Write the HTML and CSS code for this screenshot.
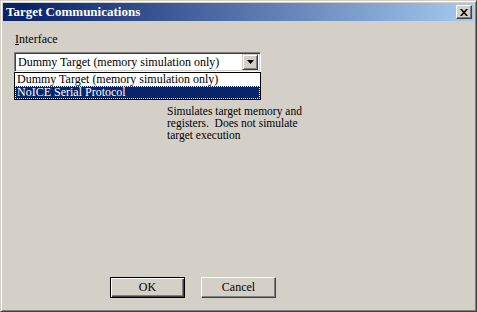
FILE: index.html
```html
<!DOCTYPE html>
<html lang="en">
<head>
  <meta charset="UTF-8">
  <title>Target Communications</title>
  <link rel="stylesheet" href="styles.css">
</head>
<body>
  <div class="window">
    <div class="titlebar">
      <span class="title">Target Communications</span>
      <button class="close-btn" aria-label="Close">
        <svg width="8" height="7" viewBox="0 0 8 7">
          <path d="M0 0h2l2 2.5 2-2.5h2l-3 3.5 3 3.5h-2l-2-2.5-2 2.5h-2l3-3.5z" fill="#000"/>
        </svg>
      </button>
    </div>

    <div class="content">
      <label class="label"><u>I</u>nterface</label>

      <div class="combo">
        <div class="combo-field">
          <span class="combo-text">Dummy Target (memory simulation only)</span>
          <span class="arrow-btn">
            <svg width="7" height="4" viewBox="0 0 7 4"><path d="M0 0h7l-3.5 4z" fill="#000"/></svg>
          </span>
        </div>
        <!-- open dropdown list -->
        <ul class="combo-list">
          <li class="item">Dummy Target (memory simulation only)</li>
          <li class="item selected">NoICE Serial Protocol</li>
        </ul>
      </div>

      <p class="desc">Simulates target memory and<br>registers.&nbsp; Does not simulate<br>target execution</p>

      <div class="buttons">
        <button class="btn default">OK</button>
        <button class="btn">Cancel</button>
      </div>
    </div>
  </div>
</body>
</html>
```

FILE: styles.css
```css
* {
  box-sizing: border-box;
}

body {
  margin: 0;
  background: #d4d0c8;
  font-family: "Liberation Serif", "Times New Roman", serif;
  font-size: 12px;
  color: #000;
}

.window {
  width: 477px;
  height: 312px;
  display: flex;
  flex-direction: column;
  padding: 2px;
  background: #d4d0c8;
  border: 1px solid;
  border-color: #d4d0c8 #404040 #404040 #d4d0c8;
  box-shadow: inset 1px 1px #fff, inset -1px -1px #808080;
}

.titlebar {
  flex: none;
  height: 18px;
  display: flex;
  align-items: center;
  justify-content: space-between;
  padding: 0 2px 0 3px;
  background: linear-gradient(to right, #0a246a 5%, #a6caf0);
}

.title {
  color: #fff;
  font-weight: bold;
  font-size: 13px;
}

.close-btn {
  width: 16px;
  height: 14px;
  padding: 0;
  display: flex;
  align-items: center;
  justify-content: center;
  background: #d4d0c8;
  border: 1px solid;
  border-color: #fff #404040 #404040 #fff;
  box-shadow: inset -1px -1px #808080;
}

.content {
  flex: 1;
  display: flex;
  flex-direction: column;
  align-items: flex-start;
  padding: 12px 0 11px 11px;
}

.label {
  line-height: 13px;
  padding-left: 1px;
}

.combo {
  position: relative;
  width: 247px;
  margin-top: 6px;
}

.combo-field {
  height: 20px;
  display: flex;
  align-items: center;
  justify-content: space-between;
  padding: 2px;
  background: #fff;
  border: 1px solid;
  border-color: #808080 #fff #fff #808080;
  box-shadow: inset 1px 1px #404040, inset -1px -1px #d4d0c8;
}

.combo-text {
  padding-left: 1px;
  line-height: 14px;
}

.arrow-btn {
  width: 16px;
  height: 16px;
  display: flex;
  align-items: center;
  justify-content: center;
  background: #d4d0c8;
  border: 1px solid;
  border-color: #d4d0c8 #404040 #404040 #d4d0c8;
  box-shadow: inset 1px 1px #fff, inset -1px -1px #808080;
}

.combo-list {
  position: absolute;
  top: 20px;
  left: 0;
  width: 247px;
  margin: 0;
  padding: 0;
  list-style: none;
  background: #fff;
  border: 1px solid #000;
}

.item {
  height: 13px;
  line-height: 13px;
  padding-left: 2px;
}

.item.selected {
  background: #0a246a;
  color: #fff;
  outline: 1px dotted #ffffc0;
  outline-offset: -1px;
}

.desc {
  margin: 33px 0 0 153px;
  font-size: 11.5px;
  line-height: 12px;
}

.buttons {
  margin-top: auto;
  margin-left: 96px;
  display: flex;
  gap: 16px;
}

.btn {
  width: 75px;
  height: 21px;
  padding: 0;
  font-family: inherit;
  font-size: 12px;
  color: #000;
  background: #d4d0c8;
  border: 1px solid;
  border-color: #fff #404040 #404040 #fff;
  box-shadow: inset -1px -1px #808080;
}

.btn.default {
  border-color: #000;
  box-shadow: inset 1px 1px #fff, inset -1px -1px #404040, inset -2px -2px #808080;
}
```
